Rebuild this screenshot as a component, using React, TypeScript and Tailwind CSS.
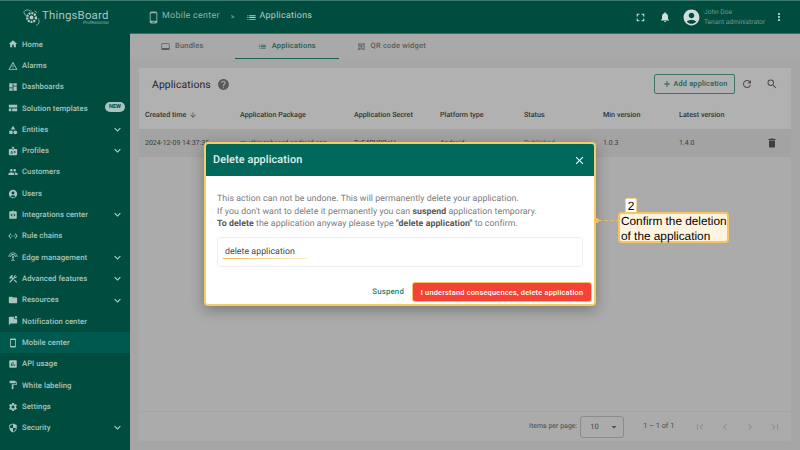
import type { ReactNode } from "react";
import {
  MdAccountCircle,
  MdAdd,
  MdArrowDownward,
  MdBadge,
  MdCategory,
  MdChevronLeft,
  MdChevronRight,
  MdClose,
  MdConstruction,
  MdDashboard,
  MdDelete,
  MdExpandMore,
  MdFirstPage,
  MdFolder,
  MdFormatPaint,
  MdFullscreen,
  MdHelp,
  MdHome,
  MdInsertChart,
  MdLastPage,
  MdList,
  MdMarkChatUnread,
  MdMoreVert,
  MdNotifications,
  MdOutlineQrCode2,
  MdPeople,
  MdPhoneAndroid,
  MdRefresh,
  MdSearch,
  MdSecurity,
  MdSettings,
  MdSettingsEthernet,
  MdSettingsInputAntenna,
  MdSmartphone,
  MdViewComfy,
  MdVideoLabel,
  MdWarningAmber,
  MdArrowDropDown,
  MdIntegrationInstructions,
} from "react-icons/md";

const navItems: { label: string; icon: ReactNode; more?: boolean; active?: boolean; badge?: boolean }[] = [
  { label: "Home", icon: <MdHome /> },
  { label: "Alarms", icon: <MdWarningAmber /> },
  { label: "Dashboards", icon: <MdDashboard /> },
  { label: "Solution templates", icon: <MdViewComfy />, badge: true },
  { label: "Entities", icon: <MdCategory />, more: true },
  { label: "Profiles", icon: <MdBadge />, more: true },
  { label: "Customers", icon: <MdPeople /> },
  { label: "Users", icon: <MdAccountCircle /> },
  { label: "Integrations center", icon: <MdIntegrationInstructions />, more: true },
  { label: "Rule chains", icon: <MdSettingsEthernet /> },
  { label: "Edge management", icon: <MdSettingsInputAntenna />, more: true },
  { label: "Advanced features", icon: <MdConstruction />, more: true },
  { label: "Resources", icon: <MdFolder />, more: true },
  { label: "Notification center", icon: <MdMarkChatUnread /> },
  { label: "Mobile center", icon: <MdSmartphone />, active: true },
  { label: "API usage", icon: <MdInsertChart /> },
  { label: "White labeling", icon: <MdFormatPaint /> },
  { label: "Settings", icon: <MdSettings /> },
  { label: "Security", icon: <MdSecurity />, more: true },
];

const columns = ["Application Package", "Application Secret", "Platform type", "Status", "Min version", "Latest version"];

function Logo() {
  return (
    <svg viewBox="0 0 20 20" className="w-[19px] h-[19px] text-[#b9cfca]" fill="none" stroke="currentColor">
      <circle cx="10" cy="10" r="4.6" strokeWidth="2.4" strokeDasharray="2 1" />
      <circle cx="10" cy="10" r="2" fill="currentColor" stroke="none" />
      <path d="M2 5c0-2 2-3 4-3s2 2 4 1M15 18c2 0 3-2 3-4s-1-2-1-3M2 5l2 3M13 3l3 2" strokeWidth="0.8" />
    </svg>
  );
}

function Sidebar() {
  return (
    <aside className="w-[130px] shrink-0 bg-[#004d40] border-t border-[#3b7b70] flex flex-col">
      <div className="h-[32.7px] pl-[22px] flex items-center gap-[1px] shrink-0">
        <Logo />
        <div className="flex flex-col items-end">
          <span className="text-[11.4px] leading-[13px] tracking-[0.2px] text-[#a9c4be]">ThingsBoard</span>
          <span className="text-[4.6px] leading-[4px] text-[#8fb0a9]">Professional</span>
        </div>
      </div>
      <nav className="flex flex-col">
        {navItems.map((item) => (
          <div
            key={item.label}
            className={`h-[21.32px] flex items-center pl-[8px] pr-[6px] ${item.active ? "bg-[#00594e]" : ""}`}
          >
            <span className="w-[14px] text-[10px] text-[#a5c5be] flex">{item.icon}</span>
            <span className="text-[7.7px] font-medium tracking-[0.05px] text-[#a5c5be] flex-1 whitespace-nowrap">
              {item.label}
            </span>
            {item.badge && (
              <span className="h-[9.5px] w-[20px] -mt-[3px] -mr-[1px] rounded-full bg-[#a9c4be] text-[#004d40] text-[5.6px] font-bold flex items-center justify-center">
                NEW
              </span>
            )}
            {item.more && <MdExpandMore className="text-[13px] text-[#b5d0ca]" />}
          </div>
        ))}
      </nav>
    </aside>
  );
}

function Header() {
  return (
    <header className="h-[34px] shrink-0 bg-[#004d40] border-t border-t-[#3b7b70] border-b border-b-[#2f7166] flex items-center pl-[17px] pr-[15px] text-[#8fb3ab]">
      <MdPhoneAndroid className="text-[13px]" />
      <span className="ml-[2px] text-[8.9px] tracking-[0.3px]">Mobile center</span>
      <span className="ml-[11px] text-[7px] text-[#b9cfca]">&gt;</span>
      <MdList className="ml-[12px] text-[11px] text-[#b9cfca]" />
      <span className="ml-[2px] text-[8.9px] tracking-[0.3px] text-[#b9cfca]">Applications</span>
      <div className="flex-1" />
      <MdFullscreen className="text-[13px] text-[#cfdedb]" />
      <MdNotifications className="ml-[12px] text-[12px] text-[#cfdedb]" />
      <MdAccountCircle className="ml-[11px] text-[19px] text-[#cfdedb]" />
      <div className="ml-[3px] pt-[1px] flex flex-col text-[6.6px] leading-[9.6px] w-[69px] text-[#6d9c92] whitespace-nowrap">
        <span>John Doe</span>
        <span>Tenant administrator</span>
      </div>
      <MdMoreVert className="text-[12px] text-[#cfdedb]" />
    </header>
  );
}

function Tab({ icon, label, active }: { icon: ReactNode; label: string; active?: boolean }) {
  return (
    <div
      className={`w-[104.5px] h-[25px] flex items-center justify-center gap-[5px] border-b text-[7.5px] font-medium tracking-[0.2px] ${
        active ? "border-[#1e5f54] text-[#1f5f54]" : "border-transparent text-[#5c5c5c]"
      }`}
    >
      <span className="text-[9px] flex">{icon}</span>
      {label}
    </div>
  );
}

function ApplicationsCard() {
  return (
    <section className="mx-[9px] mt-[9px] mb-[9px] flex-1 bg-[#ababab] flex flex-col min-h-0">
      <div className="bg-[#b1b1b1]">
        <div className="h-[32px] flex items-center pl-[13px] pr-[13px]">
          <span className="mt-[1px] text-[10.4px] tracking-[0.1px] text-[#262626]">Applications</span>
          <MdHelp className="ml-[6px] text-[13px] text-[#5a5a5a]" />
          <div className="flex-1" />
          <button className="h-[20px] w-[81px] rounded-[2px] border border-[#3f7469] flex items-center justify-center gap-[2px] text-[7.3px] font-medium tracking-[0.2px] text-[#235c50]">
            <MdAdd className="text-[10px]" />
            Add application
          </button>
          <MdRefresh className="ml-[6px] text-[12px] text-[#4c4c4c]" />
          <MdSearch className="ml-[13px] text-[12px] text-[#4c4c4c]" />
        </div>
        <div className="h-[29px] pl-[6px] pt-[1px] flex items-center text-[7.2px] font-medium text-[#333333]">
          <div className="w-[95px] flex items-center gap-[3px]">
            Created time
            <MdArrowDownward className="text-[8px] text-[#4c4c4c]" />
          </div>
          {columns.map((col, i) => (
            <div key={col} className={["w-[114px]", "w-[86px]", "w-[84px]", "w-[79px]", "w-[76px]", "w-[87px]"][i]}>
              {col}
            </div>
          ))}
        </div>
      </div>
      <div className="h-[28px] pl-[6px] bg-[#a3a3a3] flex items-center text-[7px] text-[#3a3a3a]">
        <div className="w-[95px] whitespace-nowrap">2024-12-09 14:37:35</div>
        <div className="w-[114px]">my.thingsboard.android.app</div>
        <div className="w-[86px]">TxF4PU9OaH</div>
        <div className="w-[84px]">Android</div>
        <div className="w-[79px] text-[#2b6a5c]">Published</div>
        <div className="w-[76px]">1.0.3</div>
        <div className="w-[87px]">1.4.0</div>
        <MdDelete className="text-[12px] text-[#3f3f3f]" />
      </div>
      <div className="flex-1" />
      <div className="h-[30px] border-t border-[#a5a5a5] flex items-center pl-[390px] text-[7px] text-[#4a4a4a]">
        <span className="whitespace-nowrap">Items per page:</span>
        <div className="ml-[3px] w-[44px] h-[22px] border border-[#8c8c8c] rounded-[3px] flex items-center pl-[9px] pr-[3px] justify-between">
          <span className="text-[7.5px]">10</span>
          <MdArrowDropDown className="text-[12px]" />
        </div>
        <span className="ml-[19px] text-[7.3px] whitespace-nowrap">1 – 1 of 1</span>
        <div className="ml-[20px] flex gap-[13px] text-[12px] text-[#8f8f8f]">
          <MdFirstPage />
          <MdChevronLeft />
          <MdChevronRight />
          <MdLastPage />
        </div>
      </div>
    </section>
  );
}

function DeleteDialog() {
  return (
    <div className="w-[392px] h-[164px] mt-[-2px] bg-white rounded-[4px] border-2 border-[#f3cd68] shadow-[0_4px_14px_rgba(0,0,0,0.3)] flex flex-col overflow-hidden">
      <div className="h-[32px] shrink-0 bg-[#00695c] flex items-center pl-[7px] pr-[8px] text-white">
        <span className="mt-[1px] text-[10.9px] font-medium tracking-[0.1px] text-[#e4f1ee]">Delete application</span>
        <div className="flex-1" />
        <MdClose className="text-[13px]" />
      </div>
      <div className="pt-[17px] px-[11px] text-[8.75px] leading-[12.5px] tracking-[0.07px] text-[#7a7a7a]">
        <p>This action can not be undone. This will permanently delete your application.</p>
        <p>
          If you don't want to delete it permanently you can <b className="font-bold text-[#555555]">suspend</b>{" "}
          application temporary.
        </p>
        <p>
          <b className="font-bold text-[#555555]">To delete</b> the application anyway please type{" "}
          <b className="font-bold text-[#555555]">"delete application"</b> to confirm.
        </p>
      </div>
      <div className="mx-[11px] mt-[6px] h-[30px] rounded-[3px] border border-[#eeeeee] pl-[7px] pt-[2px] flex items-center relative">
        <span className="text-[8.75px] tracking-[0.05px] text-[#444444]">delete application</span>
        <span className="absolute left-[5px] bottom-[7px] w-[84px] h-[1px] bg-gradient-to-r from-[#f5b942] to-[#fbeed0]" />
      </div>
      <div className="flex-1 flex items-center justify-end pr-[2px] pt-[14px]">
        <span className="text-[7.8px] font-medium tracking-[0.2px] text-[#1a7f70] mr-[8px]">Suspend</span>
        <button className="w-[180px] h-[20px] rounded-[3px] bg-[#f44336] border-[1.5px] border-[#f5c565] text-white text-[7.4px] font-medium tracking-[0.2px] whitespace-nowrap">
          I understand consequences, delete application
        </button>
      </div>
    </div>
  );
}

function Callout() {
  return (
    <div className="absolute left-[594px] top-[198px] font-['Liberation_Sans',sans-serif]">
      <div className="absolute left-[0px] top-[20px] w-[5px] h-[5px] rounded-full bg-[#f5c05a]" />
      <div className="absolute left-[5px] top-[22px] w-[20px] border-t border-dashed border-[#f5c05a]" />
      <div className="absolute left-[31px] top-0 w-[12px] h-[15px] bg-white border border-[#f5d58e] rounded-t-[2px] text-[12px] leading-[14px] text-center text-black">
        2
      </div>
      <div className="absolute left-[24px] top-[14px] w-[111px] h-[31px] rounded-[4px] bg-[#fff4e0] border-2 border-[#f3c566] pl-[1px] text-[11.8px] leading-[14.5px] text-black whitespace-nowrap">
        Confirm the deletion
        <br />
        of the application
      </div>
    </div>
  );
}

export default function App() {
  return (
    <div className="relative w-[800px] h-[450px] overflow-hidden flex font-['Roboto',sans-serif] [text-rendering:geometricPrecision] bg-[#a6a6a6]">
      <Sidebar />
      <main className="flex-1 flex flex-col min-w-0">
        <Header />
        <div className="h-[25px] shrink-0 flex bg-[#a9a9a9]">
          <Tab icon={<MdVideoLabel />} label="Bundles" />
          <Tab icon={<MdList />} label="Applications" active />
          <Tab icon={<MdOutlineQrCode2 />} label="QR code widget" />
        </div>
        <ApplicationsCard />
      </main>
      <div className="absolute inset-0 flex items-center justify-center">
        <DeleteDialog />
      </div>
      <Callout />
    </div>
  );
}
